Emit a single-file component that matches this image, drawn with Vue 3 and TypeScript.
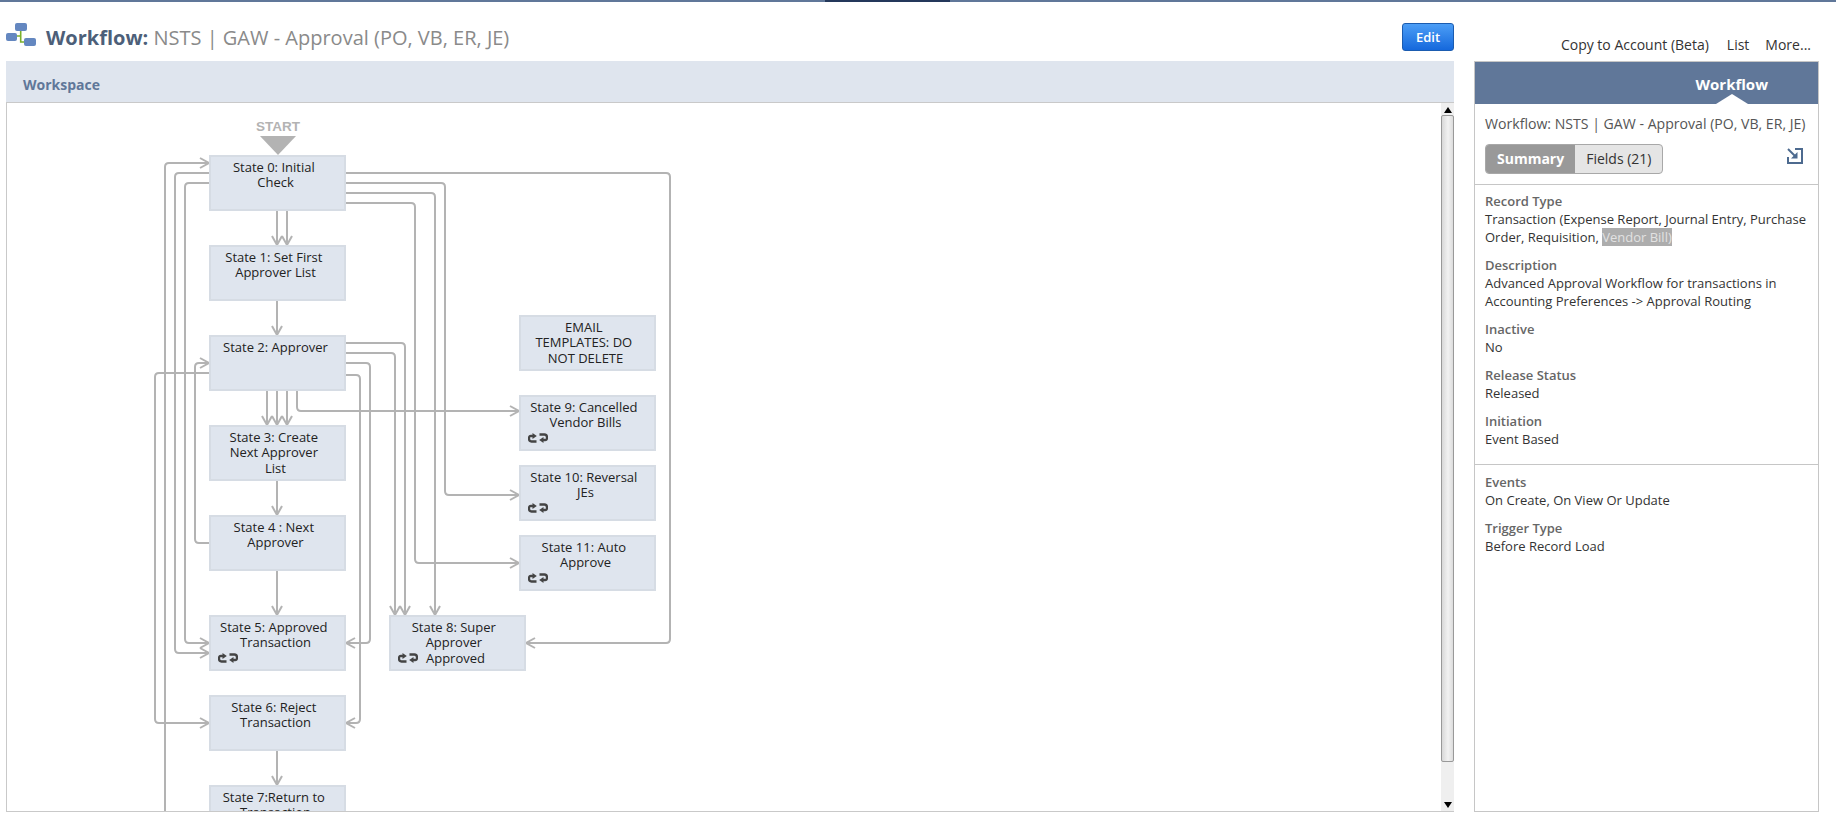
<template>
  <div class="page">
    <div class="top-bar"><span class="top-bar-active"></span></div>
    <div class="content">
      <main class="main">
        <header class="title-row">
          <svg class="title-icon" width="30" height="23" viewBox="0 0 30 23">
            <path d="M14.7 8v11H18M14.7 13H10" fill="none" stroke="#7ab02c" stroke-width="1.6" />
            <rect x="9" y="0" width="12" height="8" rx="2" fill="#6487c0" />
            <rect x="0" y="10" width="11" height="8" rx="2" fill="#6487c0" />
            <rect x="18" y="15" width="12" height="8" rx="2" fill="#6487c0" />
          </svg>
          <h1 class="title"><b>Workflow:</b> NSTS | GAW - Approval (PO, VB, ER, JE)</h1>
          <button class="edit-btn">Edit</button>
        </header>
        <div class="workspace-bar">Workspace</div>
        <div class="canvas">
          <div class="diagram">
            <svg class="edges" width="1434" height="708">
              <path v-for="(d, i) in edgePaths" :key="i" :d="d" fill="none" stroke="#b3b3b3" stroke-width="2" />
            </svg>
            <div class="start" :style="{ left: px(278 - 40), top: py(119) }">START</div>
            <div class="start-arrow" :style="{ left: px(260), top: py(136) }"></div>
            <div
              v-for="node in nodes"
              :key="node.label"
              class="node"
              :style="{ left: px(node.x), top: py(node.y) }"
            >
              <span class="node-label">{{ node.label }}</span>
              <svg v-if="node.loop" class="loop-icon" width="20" height="10" viewBox="0 0 20 10">
                <path d="M8.500 8.500H3.500Q1 8.500 1 5.500T3.500 3H5" fill="none" stroke="#444" stroke-width="2.300" />
                <path d="M4.500 0 8.800 3 4.500 6Z" fill="#444" />
                <path d="M11.500 1.500H16.500Q19 1.500 19 4.500T16.500 7H15" fill="none" stroke="#444" stroke-width="2.300" />
                <path d="M15.500 4 11.200 7 15.500 10Z" fill="#444" />
              </svg>
            </div>
          </div>
          <div class="scrollbar">
            <div class="scroll-btn"><span class="tri-up"></span></div>
            <div class="scroll-thumb"></div>
            <div class="scroll-rest"></div>
            <div class="scroll-btn"><span class="tri-down"></span></div>
          </div>
        </div>
      </main>

      <aside class="side">
        <nav class="links">
          <a>Copy to Account (Beta)</a>
          <a>List</a>
          <a>More...</a>
        </nav>
        <div class="panel">
          <div class="panel-head"><span>Workflow</span></div>
          <div class="panel-intro">
            <div class="panel-name">Workflow: NSTS | GAW - Approval (PO, VB, ER, JE)</div>
            <div class="tab-row">
              <div class="tabs">
                <span class="tab tab-active">Summary</span>
                <span class="tab">Fields (21)</span>
              </div>
              <svg class="export-icon" width="16" height="16" viewBox="0 0 16 16">
                <path d="M1 9v6h14V1H8" fill="none" stroke="#4d6a8f" stroke-width="2" />
                <path d="M1 1l8 8" fill="none" stroke="#4d6a8f" stroke-width="2" />
                <path d="M10.500 4v6.500H4Z" fill="#4d6a8f" />
              </svg>
            </div>
          </div>
          <section class="fields">
            <div class="field">
              <div class="field-label">Record Type</div>
              <div>Transaction (Expense Report, Journal Entry, Purchase Order, Requisition, <span class="selected">Vendor Bill)</span></div>
            </div>
            <div v-for="f in mainFields" :key="f.label" class="field">
              <div class="field-label">{{ f.label }}</div>
              <div>{{ f.value }}</div>
            </div>
          </section>
          <section class="fields fields-last">
            <div v-for="f in eventFields" :key="f.label" class="field">
              <div class="field-label">{{ f.label }}</div>
              <div>{{ f.value }}</div>
            </div>
          </section>
        </div>
      </aside>
    </div>
  </div>
</template>

<script setup lang="ts">
import { computed } from 'vue'

interface StateNode {
  x: number
  y: number
  label: string
  loop?: boolean
}

type Point = [number, number]

// diagram origin on the page, edges and nodes below use page coordinates
const ORIGIN_X = 7
const ORIGIN_Y = 103

const px = (x: number) => `${x - ORIGIN_X}px`
const py = (y: number) => `${y - ORIGIN_Y}px`

const nodes: StateNode[] = [
  { x: 209, y: 155, label: 'State 0: Initial \nCheck' },
  { x: 209, y: 245, label: 'State 1: Set First \nApprover List' },
  { x: 209, y: 335, label: 'State 2: Approver' },
  { x: 209, y: 425, label: 'State 3: Create \nNext Approver \nList' },
  { x: 209, y: 515, label: 'State 4 : Next \nApprover' },
  { x: 209, y: 615, label: 'State 5: Approved \nTransaction', loop: true },
  { x: 209, y: 695, label: 'State 6: Reject \nTransaction' },
  { x: 209, y: 785, label: 'State 7:Return to \nTransaction' },
  { x: 389, y: 615, label: 'State 8: Super \nApprover \nApproved', loop: true },
  { x: 519, y: 315, label: 'EMAIL \nTEMPLATES: DO \nNOT DELETE' },
  { x: 519, y: 395, label: 'State 9: Cancelled \nVendor Bills', loop: true },
  { x: 519, y: 465, label: 'State 10: Reversal \nJEs', loop: true },
  { x: 519, y: 535, label: 'State 11: Auto \nApprove', loop: true }
]

const edges: Point[][] = [
  // state 0 outgoing
  [[277, 210], [277, 245]],
  [[287, 210], [287, 245]],
  [[346, 173], [670, 173], [670, 643], [526, 643]],
  [[346, 183], [445, 183], [445, 495], [519, 495]],
  [[346, 193], [435, 193], [435, 615]],
  [[346, 203], [415, 203], [415, 563], [519, 563]],
  [[209, 173], [175, 173], [175, 653], [209, 653]],
  [[209, 183], [185, 183], [185, 643], [209, 643]],
  // back into state 0 from below the fold
  [[165, 830], [165, 163], [209, 163]],
  // state 1 and 2
  [[277, 300], [277, 335]],
  [[346, 343], [405, 343], [405, 615]],
  [[346, 353], [395, 353], [395, 615]],
  [[346, 363], [370, 363], [370, 643], [346, 643]],
  [[346, 375], [360, 375], [360, 723], [346, 723]],
  [[209, 373], [155, 373], [155, 723], [209, 723]],
  [[267, 390], [267, 425]],
  [[277, 390], [277, 425]],
  [[287, 390], [287, 425]],
  [[297, 390], [297, 411], [519, 411]],
  // lower states
  [[277, 480], [277, 515]],
  [[209, 543], [195, 543], [195, 363], [209, 363]],
  [[277, 570], [277, 615]],
  [[277, 750], [277, 785]]
]

function edgeToPath(points: Point[], r = 4): string {
  const pts = points.map(([x, y]): Point => [x - ORIGIN_X, y - ORIGIN_Y])
  let d = `M${pts[0][0]} ${pts[0][1]}`
  for (let i = 1; i < pts.length - 1; i++) {
    const [x, y] = pts[i]
    const [px0, py0] = pts[i - 1]
    const [nx, ny] = pts[i + 1]
    const inX = Math.sign(x - px0)
    const inY = Math.sign(y - py0)
    const outX = Math.sign(nx - x)
    const outY = Math.sign(ny - y)
    d += `L${x - inX * r} ${y - inY * r}Q${x} ${y} ${x + outX * r} ${y + outY * r}`
  }
  const [tx, ty] = pts[pts.length - 1]
  const [bx, by] = pts[pts.length - 2]
  d += `L${tx} ${ty}`
  // open arrow head on the last segment
  const dx = Math.sign(tx - bx)
  const dy = Math.sign(ty - by)
  const len = 9
  const half = 5
  d += `M${tx - dx * len - dy * half} ${ty - dy * len - dx * half}L${tx} ${ty}L${tx - dx * len + dy * half} ${ty - dy * len + dx * half}`
  return d
}

const edgePaths = computed(() => edges.map((e) => edgeToPath(e)))

const mainFields = [
  { label: 'Description', value: 'Advanced Approval Workflow for transactions in Accounting Preferences -> Approval Routing' },
  { label: 'Inactive', value: 'No' },
  { label: 'Release Status', value: 'Released' },
  { label: 'Initiation', value: 'Event Based' }
]

const eventFields = [
  { label: 'Events', value: 'On Create, On View Or Update' },
  { label: 'Trigger Type', value: 'Before Record Load' }
]
</script>

<style>
html,
body {
  margin: 0;
  overflow: hidden;
  background: #fff;
}
</style>

<style scoped>
.page {
  height: 816px;
  display: flex;
  flex-direction: column;
  font-family: "Open Sans", "Liberation Sans", sans-serif;
  color: #333;
}

.top-bar {
  height: 2px;
  background: #607799;
  position: relative;
  flex: none;
}

.top-bar-active {
  position: absolute;
  left: 825px;
  top: 0;
  width: 125px;
  height: 2px;
  background: #24385b;
}

.content {
  flex: 1;
  min-height: 0;
  display: flex;
  gap: 20px;
  padding: 0 17px 4px 6px;
}

.main {
  flex: 1;
  min-width: 0;
  display: flex;
  flex-direction: column;
}

.title-row {
  height: 59px;
  box-sizing: border-box;
  padding-top: 12px;
  display: flex;
  align-items: center;
  flex: none;
}

.title-icon {
  flex: none;
  margin-top: -7px;
}

.title {
  margin: 0 0 0 10px;
  flex: 1;
  font-size: 20px;
  font-weight: 400;
  color: #8a8a8a;
  white-space: nowrap;
}

.title b {
  color: #4d5f79;
  font-weight: 700;
}

.edit-btn {
  width: 52px;
  height: 28px;
  margin-top: -1px;
  padding: 0;
  border: 1px solid #1b5cb0;
  border-radius: 3px;
  background: linear-gradient(#4c9ef6, #1568dc);
  color: #fff;
  font: 600 13px "Open Sans", sans-serif;
}

.workspace-bar {
  height: 41px;
  flex: none;
  box-sizing: border-box;
  padding: 0 0 0 17px;
  line-height: 48px;
  background: #dfe5ee;
  color: #607799;
  font-size: 14px;
  font-weight: 700;
}

.canvas {
  flex: 1;
  min-height: 0;
  display: flex;
  border-top: 1px solid #c9c9c9;
  border-bottom: 1px solid #c9c9c9;
}

.diagram {
  flex: 1;
  position: relative;
  overflow: hidden;
  border-left: 1px solid #c9c9c9;
}

.edges {
  position: absolute;
  left: 0;
  top: 0;
}

.start {
  position: absolute;
  width: 80px;
  text-align: center;
  font: 700 13.5px/16px "Liberation Sans", Arial, sans-serif;
  color: #b3b3b3;
}

.start-arrow {
  position: absolute;
  width: 0;
  height: 0;
  border-left: 18px solid transparent;
  border-right: 18px solid transparent;
  border-top: 19px solid #b3b3b3;
}

.node {
  position: absolute;
  width: 137px;
  height: 56px;
  box-sizing: border-box;
  padding: 2.7px 4px 0 0;
  background: #dfe5ee;
  border: 2px solid #d6dce4;
  text-align: center;
  font-size: 13px;
  line-height: 15.5px;
  color: #222;
}

.node-label {
  white-space: pre;
}

.loop-icon {
  position: absolute;
  left: 7px;
  top: 36px;
}

.scrollbar {
  width: 13px;
  flex: none;
  display: flex;
  flex-direction: column;
  background: #efefef;
}

.scroll-btn {
  height: 12px;
  flex: none;
  display: flex;
  align-items: center;
  justify-content: center;
}

.scroll-btn:first-child {
  padding-top: 1px;
  box-sizing: border-box;
}

.tri-up,
.tri-down {
  width: 0;
  height: 0;
  border-left: 4px solid transparent;
  border-right: 4px solid transparent;
}

.tri-up {
  border-bottom: 6px solid #000;
}

.tri-down {
  border-top: 6px solid #000;
}

.scroll-thumb {
  height: 647px;
  flex: none;
  box-sizing: border-box;
  border: 1px solid #999;
  border-radius: 2px;
  background: linear-gradient(90deg, #d8d8d8, #f2f2f2 55%, #dcdcdc);
}

.scroll-rest {
  flex: 1;
}

.side {
  width: 345px;
  flex: none;
  display: flex;
  flex-direction: column;
}

.links {
  height: 59px;
  flex: none;
  box-sizing: border-box;
  padding: 0 8px 7px 0;
  display: flex;
  justify-content: flex-end;
  align-items: flex-end;
  gap: 18px;
  font-size: 14px;
  line-height: 18px;
}

.links a:last-child {
  margin-left: -2px;
}

.panel {
  flex: 1;
  min-height: 0;
  border: 1px solid #c6c6c6;
  font-size: 13px;
  line-height: 18px;
}

.panel-head {
  height: 42px;
  position: relative;
  background: #607799;
  color: #fff;
  font-size: 15px;
  font-weight: 700;
  line-height: 44px;
  text-align: right;
  padding-right: 50px;
}

.panel-head::after {
  content: "";
  position: absolute;
  right: 70px;
  bottom: 0;
  width: 0;
  height: 0;
  border-left: 16px solid transparent;
  border-right: 16px solid transparent;
  border-bottom: 10px solid #fff;
}

.panel-intro {
  padding: 11px 10px 9px;
  height: 81px;
  box-sizing: border-box;
  border-bottom: 1px solid #c6c6c6;
}

.panel-name {
  color: #555;
  font-size: 14.1px;
  white-space: nowrap;
}

.tab-row {
  margin-top: 11px;
  display: flex;
  justify-content: space-between;
  align-items: flex-start;
  padding-right: 5px;
}

.tabs {
  display: flex;
  height: 30px;
  box-sizing: border-box;
  border: 1px solid #a8a8a8;
  border-radius: 4px;
  overflow: hidden;
  background: #e5e5e5;
  line-height: 28px;
}

.tab {
  padding: 0 11px;
  font-size: 14px;
  white-space: nowrap;
}

.tab-active {
  background: #999;
  color: #fff;
  font-weight: 700;
}

.export-icon {
  margin-top: 4px;
}

.fields {
  padding: 7px 10px 16px;
  display: flex;
  flex-direction: column;
  gap: 10px;
  border-bottom: 1px solid #c6c6c6;
}

.fields-last {
  padding-top: 8px;
  border-bottom: 0;
}

.field-label {
  color: #666;
  font-weight: 600;
}

.selected {
  background: #adadad;
  color: #e2e2e2;
}
</style>
